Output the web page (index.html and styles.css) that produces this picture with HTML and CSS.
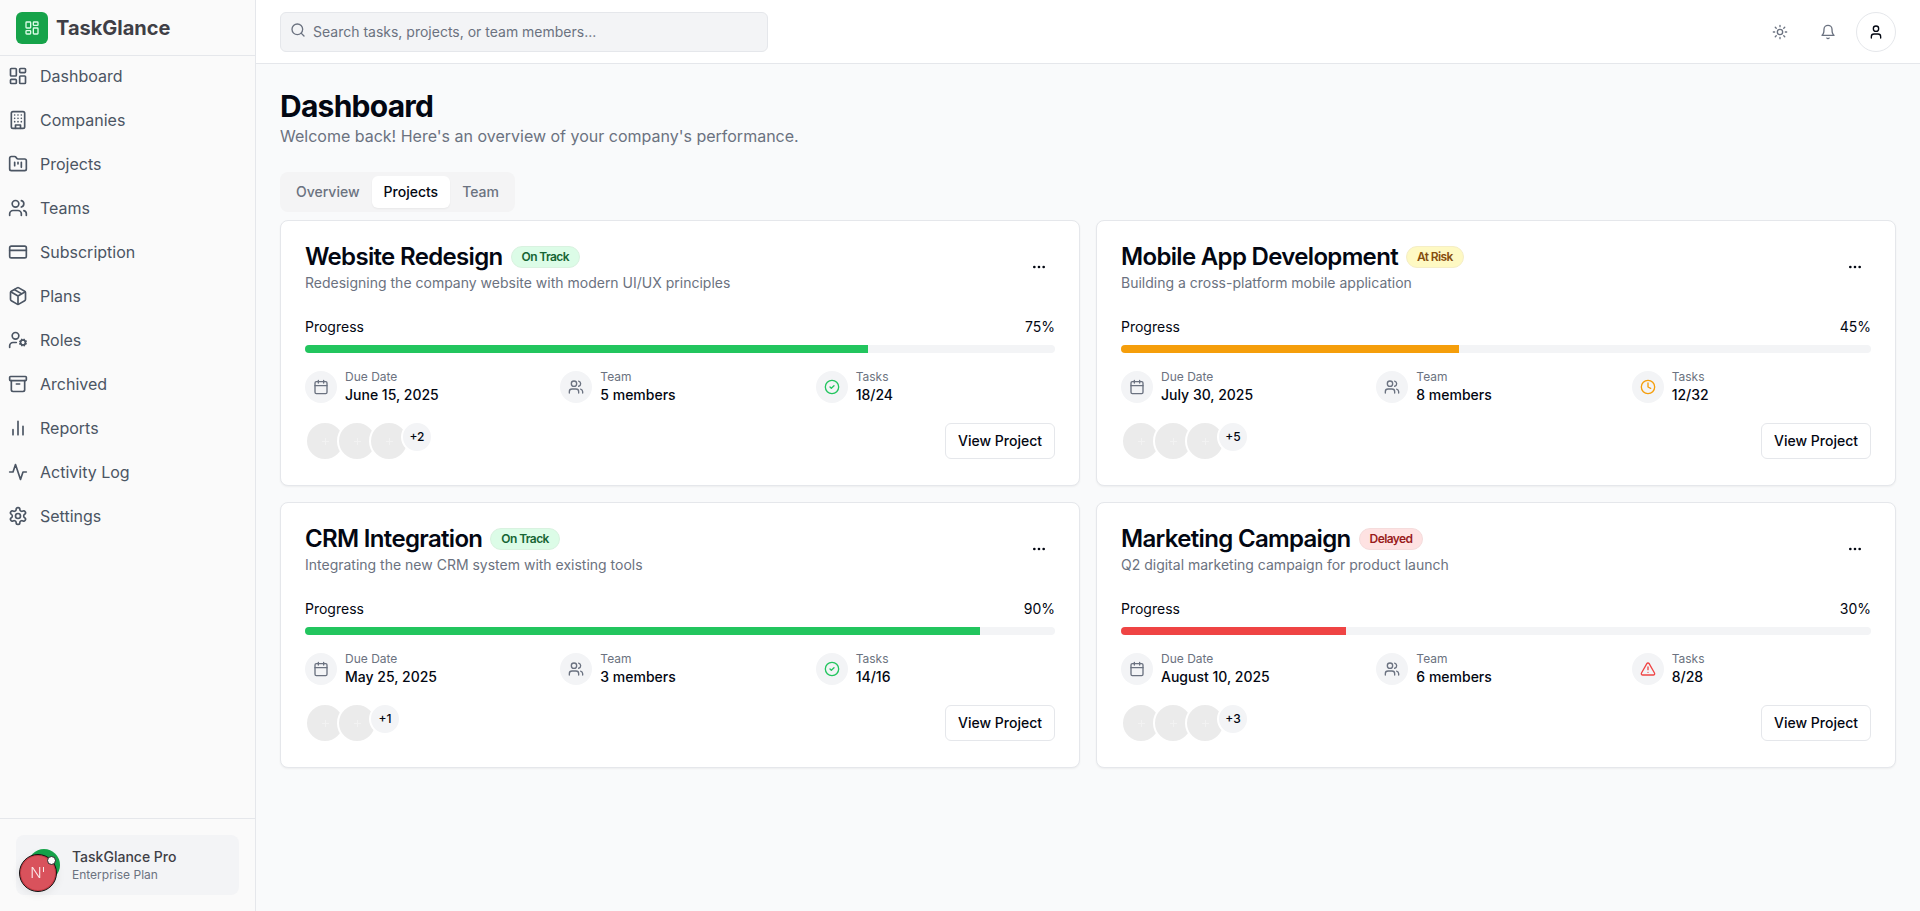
FILE: index.html
```html
<!DOCTYPE html>
<html lang="en">

<head>
    <meta charset="UTF-8">
    <title>TaskGlance Dashboard</title>
    <link rel="stylesheet" href="styles.css">
</head>

<body>
    <svg class="sprite" xmlns="http://www.w3.org/2000/svg">
        <symbol id="i-dashboard" viewBox="0 0 24 24"><rect x="3" y="3" width="7" height="9" rx="1"/><rect x="14" y="3" width="7" height="5" rx="1"/><rect x="14" y="12" width="7" height="9" rx="1"/><rect x="3" y="16" width="7" height="5" rx="1"/></symbol>
        <symbol id="i-building" viewBox="0 0 24 24"><rect x="4" y="2" width="16" height="20" rx="2"/><path d="M9 22v-4h6v4M8 6h.01M16 6h.01M12 6h.01M12 10h.01M12 14h.01M16 10h.01M16 14h.01M8 10h.01M8 14h.01"/></symbol>
        <symbol id="i-folder" viewBox="0 0 24 24"><path d="M4 20h16a2 2 0 0 0 2-2V8a2 2 0 0 0-2-2h-7.93a2 2 0 0 1-1.66-.9l-.82-1.2A2 2 0 0 0 7.93 3H4a2 2 0 0 0-2 2v13c0 1.1.9 2 2 2Z"/><path d="M8 10v4M12 10v2M16 10v6"/></symbol>
        <symbol id="i-users" viewBox="0 0 24 24"><path d="M16 21v-2a4 4 0 0 0-4-4H6a4 4 0 0 0-4 4v2"/><circle cx="9" cy="7" r="4"/><path d="M22 21v-2a4 4 0 0 0-3-3.87M16 3.13a4 4 0 0 1 0 7.75"/></symbol>
        <symbol id="i-card" viewBox="0 0 24 24"><rect x="2" y="5" width="20" height="14" rx="2"/><path d="M2 10h20"/></symbol>
        <symbol id="i-package" viewBox="0 0 24 24"><path d="M11 21.73a2 2 0 0 0 2 0l7-4A2 2 0 0 0 21 16V8a2 2 0 0 0-1-1.73l-7-4a2 2 0 0 0-2 0l-7 4A2 2 0 0 0 3 8v8a2 2 0 0 0 1 1.73z"/><path d="M12 22V12M3.29 7 12 12l8.71-5M7.5 4.27l9 5.15"/></symbol>
        <symbol id="i-usercog" viewBox="0 0 24 24"><circle cx="18" cy="15" r="3"/><circle cx="9" cy="7" r="4"/><path d="M10 15H6a4 4 0 0 0-4 4v2M21.7 16.4l-.9-.3M15.2 13.9l-.9-.3M16.6 18.7l.3-.9M19.1 12.2l.3-.9M19.6 18.7l-.4-1M16.8 12.3l-.4-1M14.3 16.6l1-.4M20.7 13.8l1-.4"/></symbol>
        <symbol id="i-archive" viewBox="0 0 24 24"><rect x="2" y="3" width="20" height="5" rx="1"/><path d="M4 8v11a2 2 0 0 0 2 2h12a2 2 0 0 0 2-2V8M10 12h4"/></symbol>
        <symbol id="i-chart" viewBox="0 0 24 24"><path d="M18 20V10M12 20V4M6 20v-6"/></symbol>
        <symbol id="i-activity" viewBox="0 0 24 24"><path d="M22 12h-4l-3 9L9 3l-3 9H2"/></symbol>
        <symbol id="i-settings" viewBox="0 0 24 24"><path d="M12.22 2h-.44a2 2 0 0 0-2 2v.18a2 2 0 0 1-1 1.73l-.43.25a2 2 0 0 1-2 0l-.15-.08a2 2 0 0 0-2.73.73l-.22.38a2 2 0 0 0 .73 2.73l.15.1a2 2 0 0 1 1 1.72v.51a2 2 0 0 1-1 1.74l-.15.09a2 2 0 0 0-.73 2.73l.22.38a2 2 0 0 0 2.73.73l.15-.08a2 2 0 0 1 2 0l.43.25a2 2 0 0 1 1 1.73V20a2 2 0 0 0 2 2h.44a2 2 0 0 0 2-2v-.18a2 2 0 0 1 1-1.73l.43-.25a2 2 0 0 1 2 0l.15.08a2 2 0 0 0 2.73-.73l.22-.39a2 2 0 0 0-.73-2.73l-.15-.08a2 2 0 0 1-1-1.74v-.5a2 2 0 0 1 1-1.74l.15-.09a2 2 0 0 0 .73-2.73l-.22-.38a2 2 0 0 0-2.73-.73l-.15.08a2 2 0 0 1-2 0l-.43-.25a2 2 0 0 1-1-1.73V4a2 2 0 0 0-2-2z"/><circle cx="12" cy="12" r="3"/></symbol>
        <symbol id="i-search" viewBox="0 0 24 24"><circle cx="11" cy="11" r="8"/><path d="m21 21-4.3-4.3"/></symbol>
        <symbol id="i-sun" viewBox="0 0 24 24"><circle cx="12" cy="12" r="4"/><path d="M12 2v2M12 20v2M4.93 4.93l1.41 1.41M17.66 17.66l1.41 1.41M2 12h2M20 12h2M6.34 17.66l-1.41 1.41M19.07 4.93l-1.41 1.41"/></symbol>
        <symbol id="i-bell" viewBox="0 0 24 24"><path d="M6 8a6 6 0 0 1 12 0c0 7 3 9 3 9H3s3-2 3-9"/><path d="M10.3 21a1.94 1.94 0 0 0 3.4 0"/></symbol>
        <symbol id="i-user" viewBox="0 0 24 24"><path d="M19 21v-2a4 4 0 0 0-4-4H9a4 4 0 0 0-4 4v2"/><circle cx="12" cy="7" r="4"/></symbol>
        <symbol id="i-calendar" viewBox="0 0 24 24"><rect x="3" y="4" width="18" height="18" rx="2"/><path d="M16 2v4M8 2v4M3 10h18"/></symbol>
        <symbol id="i-check" viewBox="0 0 24 24"><circle cx="12" cy="12" r="10"/><path d="m9 12 2 2 4-4"/></symbol>
        <symbol id="i-clock" viewBox="0 0 24 24"><circle cx="12" cy="12" r="10"/><path d="M12 6v6l4 2"/></symbol>
        <symbol id="i-alert" viewBox="0 0 24 24"><path d="m21.73 18-8-14a2 2 0 0 0-3.48 0l-8 14A2 2 0 0 0 4 21h16a2 2 0 0 0 1.73-3Z"/><path d="M12 9v4M12 17h.01"/></symbol>
        <symbol id="i-more" viewBox="0 0 24 24"><circle cx="12" cy="12" r="1"/><circle cx="19" cy="12" r="1"/><circle cx="5" cy="12" r="1"/></symbol>
    </svg>

    <div class="app">
        <aside class="sidebar">
            <div class="brand">
                <span class="brand-logo"><svg class="icon icon-16"><use href="#i-dashboard"/></svg></span>
                <span class="brand-name">TaskGlance</span>
            </div>

            <nav class="nav">
                <a class="nav-item"><svg class="icon"><use href="#i-dashboard"/></svg>Dashboard</a>
                <a class="nav-item"><svg class="icon"><use href="#i-building"/></svg>Companies</a>
                <a class="nav-item"><svg class="icon"><use href="#i-folder"/></svg>Projects</a>
                <a class="nav-item"><svg class="icon"><use href="#i-users"/></svg>Teams</a>
                <a class="nav-item"><svg class="icon"><use href="#i-card"/></svg>Subscription</a>
                <a class="nav-item"><svg class="icon"><use href="#i-package"/></svg>Plans</a>
                <a class="nav-item"><svg class="icon"><use href="#i-usercog"/></svg>Roles</a>
                <a class="nav-item"><svg class="icon"><use href="#i-archive"/></svg>Archived</a>
                <a class="nav-item"><svg class="icon"><use href="#i-chart"/></svg>Reports</a>
                <a class="nav-item"><svg class="icon"><use href="#i-activity"/></svg>Activity Log</a>
                <a class="nav-item"><svg class="icon"><use href="#i-settings"/></svg>Settings</a>
            </nav>

            <div class="sidebar-footer">
                <div class="plan">
                    <span class="plan-avatar"></span>
                    <div>
                        <div class="plan-name">TaskGlance Pro</div>
                        <div class="plan-tier">Enterprise Plan</div>
                    </div>
                </div>
            </div>
        </aside>

        <div class="main">
            <header class="topbar">
                <label class="search">
                    <svg class="icon icon-16"><use href="#i-search"/></svg>
                    <span>Search tasks, projects, or team members...</span>
                </label>
                <div class="topbar-actions">
                    <button class="icon-btn"><svg class="icon icon-16"><use href="#i-sun"/></svg></button>
                    <button class="icon-btn"><svg class="icon icon-16"><use href="#i-bell"/></svg></button>
                    <button class="icon-btn user-btn"><svg class="icon icon-16"><use href="#i-user"/></svg></button>
                </div>
            </header>

            <main class="content">
                <h1>Dashboard</h1>
                <p class="subtitle">Welcome back! Here's an overview of your company's performance.</p>

                <div class="tabs">
                    <span class="tab">Overview</span>
                    <span class="tab active">Projects</span>
                    <span class="tab">Team</span>
                </div>

                <section class="cards">
                    <article class="card">
                        <div class="card-head">
                            <div>
                                <div class="title-row">
                                    <h2>Website Redesign</h2>
                                    <span class="badge on-track">On Track</span>
                                </div>
                                <p class="desc">Redesigning the company website with modern UI/UX principles</p>
                            </div>
                            <button class="more-btn"><svg class="icon icon-16"><use href="#i-more"/></svg></button>
                        </div>
                        <div class="progress-labels"><span>Progress</span><span>75%</span></div>
                        <div class="track"><div class="fill green" style="width: 75%"></div></div>
                        <div class="meta">
                            <div class="meta-item">
                                <span class="meta-icon"><svg class="icon icon-16"><use href="#i-calendar"/></svg></span>
                                <div><div class="meta-label">Due Date</div><div class="meta-value">June 15, 2025</div></div>
                            </div>
                            <div class="meta-item">
                                <span class="meta-icon"><svg class="icon icon-16"><use href="#i-users"/></svg></span>
                                <div><div class="meta-label">Team</div><div class="meta-value">5 members</div></div>
                            </div>
                            <div class="meta-item">
                                <span class="meta-icon text-green"><svg class="icon icon-16"><use href="#i-check"/></svg></span>
                                <div><div class="meta-label">Tasks</div><div class="meta-value">18/24</div></div>
                            </div>
                        </div>
                        <div class="card-foot">
                            <div class="avatars">
                                <span class="avatar"></span><span class="avatar"></span><span class="avatar"></span>
                                <span class="avatar-more">+2</span>
                            </div>
                            <button class="view-btn">View Project</button>
                        </div>
                    </article>

                    <article class="card">
                        <div class="card-head">
                            <div>
                                <div class="title-row">
                                    <h2>Mobile App Development</h2>
                                    <span class="badge at-risk">At Risk</span>
                                </div>
                                <p class="desc">Building a cross-platform mobile application</p>
                            </div>
                            <button class="more-btn"><svg class="icon icon-16"><use href="#i-more"/></svg></button>
                        </div>
                        <div class="progress-labels"><span>Progress</span><span>45%</span></div>
                        <div class="track"><div class="fill amber" style="width: 45%"></div></div>
                        <div class="meta">
                            <div class="meta-item">
                                <span class="meta-icon"><svg class="icon icon-16"><use href="#i-calendar"/></svg></span>
                                <div><div class="meta-label">Due Date</div><div class="meta-value">July 30, 2025</div></div>
                            </div>
                            <div class="meta-item">
                                <span class="meta-icon"><svg class="icon icon-16"><use href="#i-users"/></svg></span>
                                <div><div class="meta-label">Team</div><div class="meta-value">8 members</div></div>
                            </div>
                            <div class="meta-item">
                                <span class="meta-icon text-amber"><svg class="icon icon-16"><use href="#i-clock"/></svg></span>
                                <div><div class="meta-label">Tasks</div><div class="meta-value">12/32</div></div>
                            </div>
                        </div>
                        <div class="card-foot">
                            <div class="avatars">
                                <span class="avatar"></span><span class="avatar"></span><span class="avatar"></span>
                                <span class="avatar-more">+5</span>
                            </div>
                            <button class="view-btn">View Project</button>
                        </div>
                    </article>

                    <article class="card">
                        <div class="card-head">
                            <div>
                                <div class="title-row">
                                    <h2>CRM Integration</h2>
                                    <span class="badge on-track">On Track</span>
                                </div>
                                <p class="desc">Integrating the new CRM system with existing tools</p>
                            </div>
                            <button class="more-btn"><svg class="icon icon-16"><use href="#i-more"/></svg></button>
                        </div>
                        <div class="progress-labels"><span>Progress</span><span>90%</span></div>
                        <div class="track"><div class="fill green" style="width: 90%"></div></div>
                        <div class="meta">
                            <div class="meta-item">
                                <span class="meta-icon"><svg class="icon icon-16"><use href="#i-calendar"/></svg></span>
                                <div><div class="meta-label">Due Date</div><div class="meta-value">May 25, 2025</div></div>
                            </div>
                            <div class="meta-item">
                                <span class="meta-icon"><svg class="icon icon-16"><use href="#i-users"/></svg></span>
                                <div><div class="meta-label">Team</div><div class="meta-value">3 members</div></div>
                            </div>
                            <div class="meta-item">
                                <span class="meta-icon text-green"><svg class="icon icon-16"><use href="#i-check"/></svg></span>
                                <div><div class="meta-label">Tasks</div><div class="meta-value">14/16</div></div>
                            </div>
                        </div>
                        <div class="card-foot">
                            <div class="avatars">
                                <span class="avatar"></span><span class="avatar"></span>
                                <span class="avatar-more">+1</span>
                            </div>
                            <button class="view-btn">View Project</button>
                        </div>
                    </article>

                    <article class="card">
                        <div class="card-head">
                            <div>
                                <div class="title-row">
                                    <h2>Marketing Campaign</h2>
                                    <span class="badge delayed">Delayed</span>
                                </div>
                                <p class="desc">Q2 digital marketing campaign for product launch</p>
                            </div>
                            <button class="more-btn"><svg class="icon icon-16"><use href="#i-more"/></svg></button>
                        </div>
                        <div class="progress-labels"><span>Progress</span><span>30%</span></div>
                        <div class="track"><div class="fill red" style="width: 30%"></div></div>
                        <div class="meta">
                            <div class="meta-item">
                                <span class="meta-icon"><svg class="icon icon-16"><use href="#i-calendar"/></svg></span>
                                <div><div class="meta-label">Due Date</div><div class="meta-value">August 10, 2025</div></div>
                            </div>
                            <div class="meta-item">
                                <span class="meta-icon"><svg class="icon icon-16"><use href="#i-users"/></svg></span>
                                <div><div class="meta-label">Team</div><div class="meta-value">6 members</div></div>
                            </div>
                            <div class="meta-item">
                                <span class="meta-icon text-red"><svg class="icon icon-16"><use href="#i-alert"/></svg></span>
                                <div><div class="meta-label">Tasks</div><div class="meta-value">8/28</div></div>
                            </div>
                        </div>
                        <div class="card-foot">
                            <div class="avatars">
                                <span class="avatar"></span><span class="avatar"></span><span class="avatar"></span>
                                <span class="avatar-more">+3</span>
                            </div>
                            <button class="view-btn">View Project</button>
                        </div>
                    </article>
                </section>
            </main>
        </div>
    </div>

    <div class="dev-badge">
        <span class="dev-letter">N</span>
        <span class="dev-dot"></span>
    </div>
</body>

</html>
```

FILE: styles.css
```css
* {
    box-sizing: border-box;
}

html,
body {
    margin: 0;
    height: 100%;
    overflow: hidden;
}

body {
    font-family: Inter, "Liberation Sans", sans-serif;
    font-size: 14px;
    line-height: 20px;
    color: #030712;
    background: #f9fafb;
}

.sprite {
    display: none;
}

.icon {
    width: 20px;
    height: 20px;
    flex-shrink: 0;
    fill: none;
    stroke: currentColor;
    stroke-width: 2;
    stroke-linecap: round;
    stroke-linejoin: round;
}

.icon-16 {
    width: 16px;
    height: 16px;
}

.app {
    display: flex;
    height: 100vh;
}

/* sidebar */
.sidebar {
    width: 256px;
    flex-shrink: 0;
    display: flex;
    flex-direction: column;
    background: #fafafa;
    border-right: 1px solid #e5e7eb;
}

.brand {
    height: 56px;
    flex-shrink: 0;
    display: flex;
    align-items: center;
    gap: 8px;
    padding-left: 16px;
    border-bottom: 1px solid #e5e7eb;
}

.brand-logo {
    width: 32px;
    height: 32px;
    display: flex;
    align-items: center;
    justify-content: center;
    border-radius: 6px;
    background: #16a34a;
    color: #dcfce7;
}

.brand-name {
    font-size: 20px;
    line-height: 28px;
    font-weight: 700;
    color: #3f3f46;
}

.nav {
    flex: 1;
    display: flex;
    flex-direction: column;
    gap: 4px;
}

.nav-item {
    height: 40px;
    display: flex;
    align-items: center;
    gap: 12px;
    padding-left: 8px;
    font-size: 16px;
    color: #4b5563;
}

.sidebar-footer {
    padding: 16px;
    border-top: 1px solid #e5e7eb;
}

.plan {
    height: 60px;
    display: flex;
    align-items: center;
    gap: 12px;
    padding: 0 12px;
    border-radius: 8px;
    background: #f3f4f6;
}

.plan-avatar {
    width: 32px;
    height: 32px;
    border-radius: 50%;
    background: #16a34a;
}

.plan-name {
    font-weight: 450;
    color: #3f3f46;
}

.plan-tier {
    font-size: 12px;
    line-height: 16px;
    color: #6b7280;
}

/* next dev indicator sits over the plan card */
.dev-badge {
    position: fixed;
    left: 19px;
    bottom: 19px;
    width: 38px;
    height: 38px;
    display: flex;
    align-items: center;
    justify-content: center;
    border: 1px solid #111;
    border-radius: 50%;
    background: #d9525c;
    box-shadow: inset 0 0 0 1px #c53a44, 0 2px 10px rgba(0, 0, 0, 0.08);
}

.dev-letter {
    position: relative;
    left: -2px;
    font-size: 15px;
    font-weight: 300;
    color: #fbeaea;
}

/* the small tick beside the N */
.dev-letter::after {
    content: "";
    position: absolute;
    top: 4px;
    right: -2px;
    width: 1px;
    height: 5px;
    background: #fbeaea;
}

.dev-dot {
    position: absolute;
    top: 1px;
    right: 0;
    width: 9px;
    height: 9px;
    border: 1px solid #222;
    border-radius: 50%;
    background: #fff;
}

/* top bar */
.main {
    flex: 1;
    min-width: 0;
    display: flex;
    flex-direction: column;
}

.topbar {
    height: 64px;
    flex-shrink: 0;
    display: flex;
    align-items: center;
    justify-content: space-between;
    padding: 0 24px;
    background: #fff;
    border-bottom: 1px solid #e5e7eb;
}

.search {
    width: 488px;
    height: 40px;
    display: flex;
    align-items: center;
    gap: 7px;
    padding-left: 9px;
    border: 1px solid #e5e7eb;
    border-radius: 6px;
    background: #f3f4f6;
    color: #6b7280;
}

.search .icon {
    margin-top: -3px;
}

.topbar-actions {
    display: flex;
    gap: 8px;
}

.icon-btn {
    width: 40px;
    height: 40px;
    display: flex;
    align-items: center;
    justify-content: center;
    padding: 0;
    border: 0;
    border-radius: 50%;
    background: none;
    color: #6b7280;
}

.user-btn {
    border: 1px solid #e5e7eb;
    color: #030712;
}

/* page content */
.content {
    flex: 1;
    padding: 24px;
}

h1 {
    margin: 0;
    font-size: 30px;
    line-height: 36px;
    font-weight: 700;
    letter-spacing: -0.025em;
}

.subtitle {
    margin: 0;
    font-size: 16px;
    line-height: 24px;
    color: #6b7280;
}

.tabs {
    display: inline-flex;
    height: 40px;
    margin-top: 24px;
    padding: 4px;
    border-radius: 8px;
    background: #f4f4f5;
    vertical-align: top;
}

.tab {
    padding: 6px 12px;
    border-radius: 6px;
    font-weight: 500;
    color: #6b7280;
}

.tab.active {
    background: #fff;
    color: #030712;
    font-weight: 450;
    box-shadow: 0 1px 2px rgba(0, 0, 0, 0.05);
}

.cards {
    display: grid;
    grid-template-columns: 1fr 1fr;
    gap: 16px;
    margin-top: 8px;
}

.card {
    padding: 24px;
    border: 1px solid #e5e7eb;
    border-radius: 8px;
    background: #fff;
    box-shadow: 0 1px 2px rgba(0, 0, 0, 0.05);
}

.card-head {
    display: flex;
    justify-content: space-between;
    align-items: flex-start;
}

.title-row {
    display: flex;
    align-items: center;
    gap: 8px;
}

h2 {
    margin: 0;
    font-size: 24px;
    line-height: 24px;
    font-weight: 600;
    letter-spacing: -0.028em;
}

.badge {
    height: 22px;
    padding: 0 10px;
    border: 1px solid;
    border-radius: 999px;
    font-size: 12px;
    line-height: 20px;
    font-weight: 600;
    letter-spacing: -0.05em;
}

.on-track {
    background: #dcfce7;
    border-color: #d9f2e0;
    color: #166534;
}

.at-risk {
    background: #fef9c3;
    border-color: #f5eec6;
    color: #854d0e;
}

.delayed {
    background: #fee2e2;
    border-color: #f5dcdc;
    color: #991b1b;
}

.desc {
    margin: 4px 0 0;
    color: #6b7280;
}

.more-btn {
    width: 32px;
    height: 36px;
    display: flex;
    align-items: center;
    justify-content: center;
    margin-top: 4px;
    padding: 0;
    border: 0;
    background: none;
    color: #030712;
}

.progress-labels {
    display: flex;
    justify-content: space-between;
    margin-top: 24px;
}

.track {
    height: 8px;
    margin-top: 8px;
    overflow: hidden;
    border-radius: 999px;
    background: #f3f4f6;
}

.fill {
    height: 100%;
}

.green {
    background: #22c55e;
}

.amber {
    background: #f59e0b;
}

.red {
    background: #ef4444;
}

.meta {
    display: grid;
    grid-template-columns: repeat(3, 1fr);
    gap: 16px;
    margin-top: 16px;
}

.meta-item {
    display: flex;
    align-items: center;
    gap: 8px;
}

.meta-icon {
    width: 32px;
    height: 32px;
    display: flex;
    align-items: center;
    justify-content: center;
    border-radius: 50%;
    background: #f3f4f6;
    color: #6b7280;
}

.text-green {
    color: #22c55e;
}

.text-amber {
    color: #f59e0b;
}

.text-red {
    color: #ef4444;
}

.meta-label {
    font-size: 12px;
    line-height: 16px;
    color: #6b7280;
}

.meta-value {
    font-weight: 450;
}

.card-foot {
    display: flex;
    justify-content: space-between;
    align-items: center;
    margin-top: 16px;
}

.avatars {
    display: flex;
    align-items: flex-start;
}

.avatar {
    width: 40px;
    height: 40px;
    margin-right: -8px;
    border: 2px solid #fff;
    border-radius: 50%;
    background:
        linear-gradient(#f2f2f2, #f2f2f2) center / 7px 1px no-repeat,
        linear-gradient(#f2f2f2, #f2f2f2) center / 1px 7px no-repeat,
        #ebebeb;
}

.avatar-more {
    width: 32px;
    height: 32px;
    display: flex;
    align-items: center;
    justify-content: center;
    border: 2px solid #fff;
    border-radius: 50%;
    background: #f3f4f6;
    font-size: 12px;
    font-weight: 450;
}

.view-btn {
    width: 110px;
    height: 36px;
    padding: 0 0 2px;
    border: 1px solid #e5e7eb;
    border-radius: 6px;
    background: #fff;
    font-family: inherit;
    font-size: 14px;
    font-weight: 450;
    color: #030712;
}
```
